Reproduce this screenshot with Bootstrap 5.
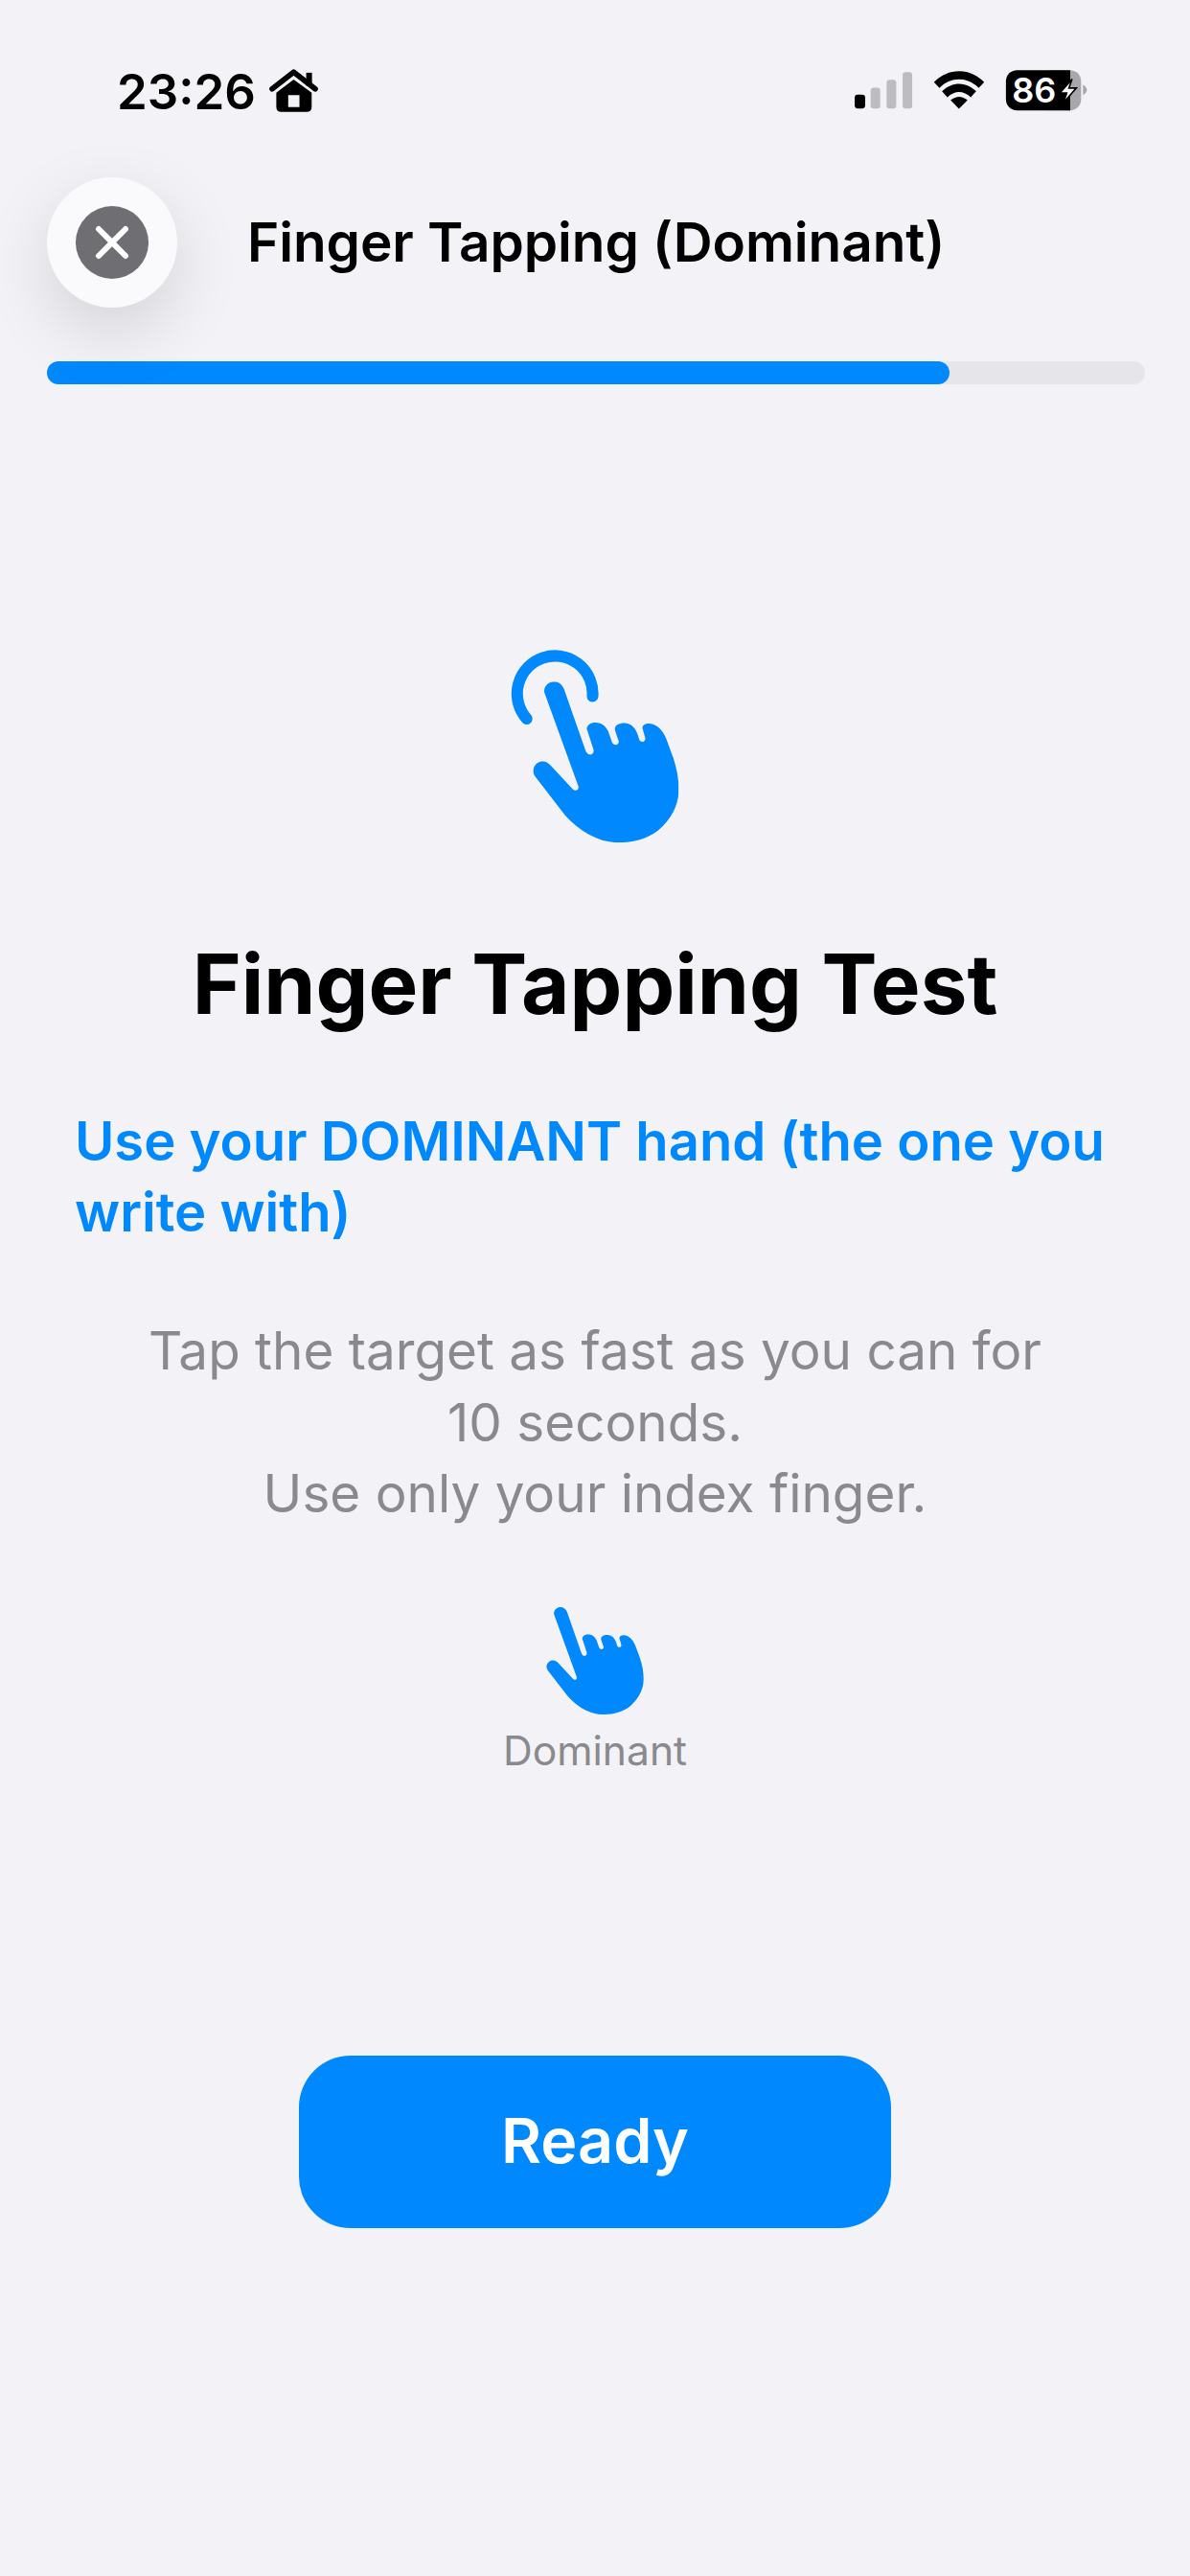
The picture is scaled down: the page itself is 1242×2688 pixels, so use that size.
<!DOCTYPE html>
<html lang="en">
<head>
<meta charset="utf-8">
<title>Finger Tapping</title>
<link rel="stylesheet" href="https://cdn.jsdelivr.net/npm/bootstrap@5.3.0/dist/css/bootstrap.min.css">
<style>
html,body{margin:0;background:#f2f2f7;}
body{font-family:Inter,"Liberation Sans",sans-serif;width:1242px;height:2688px;overflow:hidden;color:#000;}
.status-row{height:185px;padding:67px 107px 0 122px;align-items:flex-start;}
.clock{font-size:51px;line-height:58px;font-weight:600;}
.home-ico{width:51px;height:45px;margin-left:14px;margin-top:5px;}
.sys-ico{width:243px;height:43px;margin-top:6px;}
.top-row{padding-left:49px;height:136px;}
.close-disc{width:136px;height:136px;background:#fafafc;border:0;box-shadow:0 24px 70px rgba(0,0,0,.13);}
.close-inner{width:76px;height:76px;background:#6e6e73;}
.screen-title{font-size:56.7px;font-weight:600;margin:0 0 0 73px;line-height:68px;letter-spacing:-.1px;}
.track{margin:56px 47px 0 49px;height:24px;background:#e5e5ea;border-radius:12px;}
.track-fill{height:24px;background:#0088ff;border-radius:12px;}
.big-hand{width:177px;height:204px;margin-top:276px;margin-left:1px;}
.test-title{font-size:87px;line-height:108px;font-weight:700;margin:92px 0 0;}
.blue-note{font-size:56.2px;line-height:74px;font-weight:600;color:#0088ff;margin:73px 0 0;padding:0 78px;}
.grey-note{font-size:54.8px;line-height:74.5px;font-weight:400;color:#8a8a8e;margin:70px 0 0;padding:0 120px;}
.small-hand{width:102px;height:112px;margin-top:81px;margin-left:-1px;}
.hand-label{font-size:42.6px;line-height:48px;color:#8a8a8e;margin-top:14px;}
.ready-btn{width:618px;height:180px;margin-top:294px;background:#0088ff;border:0;border-radius:54px;font-size:64.5px;font-weight:600;color:#fff;}
.ready-btn:hover{background:#0088ff;color:#fff;}
</style>
</head>
<body>
<svg width="0" height="0" class="position-absolute">
  <symbol id="hand" viewBox="170 182 455 503">
    <path fill="#0088ff" d="M205 215C203 195 220 182 236 182C250 182 261 191 267 206L333 395C336 405 342 410 347 410C354 411 362 404 358 392L338 330C338 318 350 310 365 310C385 310 398 322 405 338L417 372C420 381 436 384 438 370L426 334C423 320 438 312 455 312C475 312 488 325 496 345L502 364C506 373 520 372 521 360L512 328C511 318 520 313 532 313C555 313 574 332 586 360L608 420C620 455 626 490 625 525C624 570 600 615 560 648C525 675 480 686 430 685C370 682 315 650 270 600L176 478C166 464 170 448 183 437C197 427 213 431 225 444L294 518C304 527 315 520 311 508Z"/>
  </symbol>
</svg>

<div class="d-flex justify-content-between status-row">
  <div class="d-flex align-items-start">
    <span class="clock">23:26</span>
    <svg class="home-ico" viewBox="600 97 152 133" aria-hidden="true">
      <path fill="#000" d="M715 108h18v40h-18z"/>
      <path fill="none" stroke="#000" stroke-width="17" stroke-linecap="round" stroke-linejoin="round" d="M609 158L676 106L743 158"/>
      <path fill="#000" fill-rule="evenodd" d="M622 170L676 129L732 170V214Q732 230 716 230H638Q622 230 622 214ZM659 178V215H694V178Z"/>
    </svg>
  </div>
  <svg class="sys-ico" viewBox="92 70 728 128" aria-hidden="true">
    <rect x="92" y="147" width="33" height="43" rx="10" fill="#000"/>
    <rect x="142" y="125" width="30" height="65" rx="9" fill="#bcbcc1"/>
    <rect x="192" y="100" width="30" height="90" rx="9" fill="#bcbcc1"/>
    <rect x="242" y="76" width="30" height="114" rx="9" fill="#bcbcc1"/>
    <path fill="#000" d="M340 108C385 62 452 62 497 108L480 126C445 90 392 90 357 126Z"/>
    <path fill="#000" d="M365 136C398 105 440 105 472 136L455 155C432 133 405 133 382 155Z"/>
    <path fill="#000" d="M392 164C410 150 427 150 445 164L418 191Z"/>
    <path fill="#a8a8ac" d="M700 70H765C785 70 800 85 800 105V161C800 181 785 196 765 196H700Z"/>
    <path fill="#000" d="M600 70H766V196H600C580 196 565 181 565 161V105C565 85 580 70 600 70Z"/>
    <path fill="#a8a8ac" d="M806 116C814 120 818 126 818 132C818 138 814 144 806 148Z"/>
    <text x="584" y="172" font-family="Inter,sans-serif" font-size="108" font-weight="600" fill="#fff">86</text>
    <path fill="#fff" stroke="#000" stroke-width="5" d="M772 98L733 142H755L745 172L785 126H762Z"/>
  </svg>
</div>

<div class="d-flex align-items-center top-row">
  <button class="rounded-circle d-flex align-items-center justify-content-center p-0 close-disc" aria-label="Close">
    <span class="rounded-circle d-flex align-items-center justify-content-center close-inner">
      <svg width="36" height="36" viewBox="0 0 36 36" aria-hidden="true"><path d="M4 4L32 32M32 4L4 32" stroke="#fff" stroke-width="6" stroke-linecap="round"/></svg>
    </span>
  </button>
  <h1 class="screen-title">Finger Tapping (Dominant)</h1>
</div>

<div class="track"><div class="track-fill" style="width:82.2%"></div></div>

<main class="d-flex flex-column align-items-center">
  <svg class="big-hand" viewBox="100 80 530 610" aria-hidden="true">
    <path d="M150 298A118 118 0 1 1 356 228" fill="none" stroke="#0088ff" stroke-width="36" stroke-linecap="round"/>
    <use href="#hand" x="170" y="182" width="455" height="503"/>
  </svg>
  <h2 class="test-title text-center">Finger Tapping Test</h2>
  <p class="blue-note w-100">Use your DOMINANT hand (the one you write with)</p>
  <p class="grey-note text-center w-100">Tap the target as fast as you can for 10&nbsp;seconds.<br>Use only your index finger.</p>
  <svg class="small-hand" aria-hidden="true"><use href="#hand" width="102" height="112"/></svg>
  <div class="hand-label">Dominant</div>
  <button class="btn ready-btn">Ready</button>
</main>
</body>
</html>
